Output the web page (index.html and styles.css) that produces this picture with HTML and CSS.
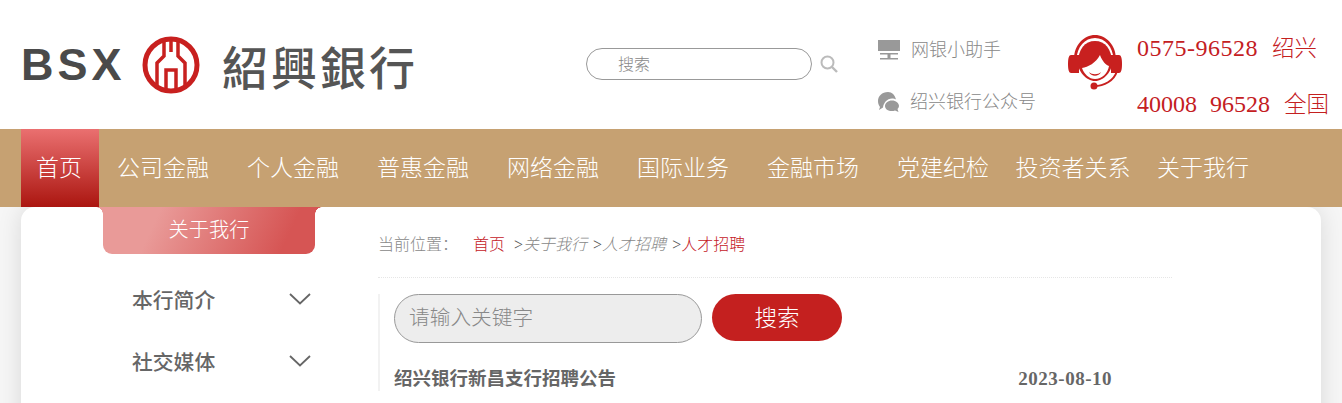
FILE: index.html
```html
<!DOCTYPE html>
<html lang="zh-CN">
<head>
  <meta charset="UTF-8" />
  <title>绍兴银行 - 人才招聘</title>
  <link rel="stylesheet" href="styles.css">
</head>
<body>
  <div class="header">
    <a class="logo" href="#">
      <span class="logo-bsx">BSX</span>
      <svg class="logo-mark" width="58" height="58" viewBox="0 0 58 58">
        <circle cx="29" cy="29" r="26" fill="none" stroke="#c8201f" stroke-width="5"/>
        <path d="M22 3V20L15 27V50M36 3V20L43 27V50M29 3V16M24 53V34H34V53" fill="none" stroke="#c8201f" stroke-width="3.500"/>
      </svg>
      <span class="logo-name">紹興銀行</span>
    </a>

    <div class="search">
      <input class="search-input" type="text" placeholder="搜索">
      <svg class="search-icon" width="18" height="18" viewBox="0 0 18 18">
        <circle cx="7.500" cy="7.500" r="6" fill="none" stroke="#bbb" stroke-width="2"/>
        <path d="M12 12L17 17" stroke="#bbb" stroke-width="2.400"/>
      </svg>
    </div>

    <div class="links">
      <a class="link link-top" href="#">
        <svg width="22" height="20" viewBox="0 0 22 20">
          <path d="M0 0H22V11H0ZM2 13H20V14.500H2ZM9.500 14.500H12.500V18H9.500ZM2 18H20V19.500H2Z" fill="#999"/>
        </svg>
        网银小助手
      </a>
      <a class="link" href="#">
        <svg width="21" height="20" viewBox="0 0 21 20">
          <path d="M10 0C4 0 0 4 0 9C0 11 .5 13 2 15L1 18L5 15.500C5.500 11 9 6.500 14 6.500C15.500 6.500 17 6.800 18 7.500C17 3 14 0 10 0Z" fill="#999"/>
          <path d="M14 8.500C10 8.500 7 11 7 14C7 17 10 19 14 19C15 19 16 19 17 18.500L20.500 20L19.500 17C20.500 16 21 15 21 14C21 11 18 8.500 14 8.500Z" fill="#999"/>
        </svg>
        绍兴银行公众号
      </a>
    </div>

    <svg class="phone-icon" width="54" height="56" viewBox="0 0 54 56">
      <path d="M6 24C6 10 16 0 27 0C38 0 48 10 48 24H45.500C45 12 37 3 27 3C17 3 9 12 8.500 24Z" fill="#c8201f"/>
      <path d="M10 28C10 14 17 6 27 6C37 6 44 14 44 28C44 36 36 46 27 46C18 46 10 36 10 28Z" fill="#c8201f"/>
      <path d="M14 33C20 32 28 28 32 20C34 26 38 30 41 31C40 38 34 44 27 44C21 44 16 39 14 33Z" fill="#fff"/>
      <path d="M21 37C24 40 30 40 33 37C31 42 23 42 21 37Z" fill="#c8201f"/>
      <path d="M3 20H11V38H3C1 38 0 35 0 29C0 23 1 20 3 20ZM43 20H51C53 20 54 23 54 29C54 35 53 38 51 38H43Z" fill="#c8201f"/>
      <path d="M26 51C36 51 46 46 49 36" fill="none" stroke="#c8201f" stroke-width="2"/>
      <circle cx="26" cy="51" r="3.500" fill="#c8201f"/>
    </svg>

    <div class="phones">
      <p class="phones-local">0575-96528&nbsp; <span class="phones-area">绍兴</span></p>
      <p class="phones-all">40008&nbsp; 96528&nbsp; <span class="phones-area">全国</span></p>
    </div>
  </div>

  <div class="nav">
    <a class="nav-item nav-home" href="#">首页</a>
    <a class="nav-item" href="#">公司金融</a>
    <a class="nav-item" href="#">个人金融</a>
    <a class="nav-item" href="#">普惠金融</a>
    <a class="nav-item" href="#">网络金融</a>
    <a class="nav-item" href="#">国际业务</a>
    <a class="nav-item" href="#">金融市场</a>
    <a class="nav-item" href="#">党建纪检</a>
    <a class="nav-item" href="#">投资者关系</a>
    <a class="nav-item" href="#">关于我行</a>
  </div>

  <div class="page">
    <div class="card">
      <div class="side">
        <div class="side-title">关于我行</div>
        <div class="side-item">
          本行简介
          <svg width="22" height="14" viewBox="0 0 22 14"><path d="M1 2L11 11.500L21 2" fill="none" stroke="#666" stroke-width="1.800"/></svg>
        </div>
        <div class="side-item">
          社交媒体
          <svg width="22" height="14" viewBox="0 0 22 14"><path d="M1 2L11 11.500L21 2" fill="none" stroke="#666" stroke-width="1.800"/></svg>
        </div>
      </div>

      <div class="content">
        <div class="crumbs">
          <span class="crumbs-label">当前位置：</span>
          <a class="crumbs-home" href="#">首页</a>
          <span class="crumbs-sep">&gt;</span><a class="crumbs-link" href="#">关于我行</a>
          <span class="crumbs-sep">&gt;</span><a class="crumbs-link" href="#">人才招聘</a>
          <span class="crumbs-sep">&gt;</span><span class="crumbs-now">人才招聘</span>
        </div>

        <div class="list">
          <div class="list-search">
            <input class="keyword" type="text" placeholder="请输入关键字">
            <button class="btn-search" type="button">搜索</button>
          </div>
          <div class="list-row">
            <a href="#">绍兴银行新昌支行招聘公告</a>
            <span class="list-date">2023-08-10</span>
          </div>
        </div>
      </div>
    </div>
  </div>
</body>
</html>
```

FILE: styles.css
```css
:root {
  --rojo: #c4201f;
  --tostado: #c6a172;
  --gris: #666;
}

* {
  box-sizing: border-box;
}

html,
body {
  height: 403px;
  overflow: hidden;
}

body {
  margin: 0;
  font-family: "Liberation Serif", "Noto Sans CJK SC", serif;
  font-weight: 300;
  background-color: #f6f6f6;
  color: var(--gris);
}

a {
  color: inherit;
  text-decoration: none;
}

p {
  margin: 0;
}

.header {
  height: 129px;
  background-color: #fff;
  display: flex;
  padding-left: 21px;
}

.logo {
  flex: none;
  width: 397px;
  height: 129px;
  display: flex;
  align-items: center;
}

.logo-bsx {
  flex: none;
  font-family: "Liberation Sans", sans-serif;
  font-size: 45px;
  font-weight: 700;
  letter-spacing: 4px;
  color: #4a4a4a;
  width: 121px;
}

.logo-mark {
  flex: none;
}

.logo-name {
  flex: none;
  margin-left: 22px;
  font-family: "Noto Sans CJK TC", sans-serif;
  font-size: 46px;
  font-weight: 500;
  letter-spacing: 3px;
  line-height: 1;
  color: #555;
  white-space: nowrap;
}

.search {
  margin-left: 168px;
  margin-top: 48px;
  width: 252px;
  height: 32px;
  display: flex;
  align-items: center;
  gap: 8px;
}

.search-input {
  width: 226px;
  height: 32px;
  border: 1px solid #999;
  border-radius: 16px;
  padding: 1px 0 0 31px;
  font-family: inherit;
  font-weight: 300;
  font-size: 16px;
  outline: none;
}

.search-input::placeholder,
.keyword::placeholder {
  color: #888;
  opacity: 1;
}

.search-icon {
  flex: none;
}

.links {
  margin-left: 40px;
  width: 190px;
  padding-top: 37px;
  display: flex;
  flex-direction: column;
  gap: 31px;
}

.link {
  display: flex;
  align-items: center;
  gap: 11px;
  height: 21px;
  font-size: 18px;
  color: #888;
  white-space: nowrap;
}

.link svg {
  flex: none;
  margin-top: 4px;
}

.link-top {
  gap: 11px;
}

.phone-icon {
  margin-top: 35px;
  flex: none;
}

.phones {
  margin-left: 15px;
  padding-top: 33px;
  font-size: 24px;
  line-height: 30px;
  color: var(--rojo);
  white-space: nowrap;
  display: flex;
  flex-direction: column;
  gap: 25px;
}

.phones-local {
  letter-spacing: 0.5px;
}

.phones-all {
  word-spacing: 0.5px;
}

.phones-area {
  margin-left: 1px;
  font-size: 22.500px;
  letter-spacing: 0;
}

.nav {
  height: 78px;
  padding-left: 21px;
  background-color: var(--tostado);
  display: flex;
}

.nav-item {
  width: 130px;
  flex: none;
  padding-right: 2px;
  font-size: 23px;
  line-height: 80px;
  text-align: center;
  color: #fff;
  white-space: nowrap;
}

.nav-home {
  width: 78px;
  background: linear-gradient(#ea7070, #ab1610);
}

.page {
  height: 196px;
  padding: 0 21px;
  overflow: hidden;
}

.card {
  height: 260px;
  background-color: #fff;
  border-radius: 14px;
  box-shadow: 0 0 24px rgba(0, 0, 0, 0.12);
  display: flex;
}

.side {
  width: 357px;
  flex: none;
}

.side-title {
  position: relative;
  width: 212px;
  height: 47px;
  margin-left: 82px;
  border-radius: 0 0 9px 9px;
  background: linear-gradient(115deg, #e99a98 25%, #d65554 85%);
  color: #fff;
  font-size: 20.300px;
  line-height: 47px;
  text-align: center;
}

.side-title::before,
.side-title::after {
  content: "";
  position: absolute;
  top: 0;
  width: 7px;
  height: 7px;
}

.side-title::before {
  left: -7px;
  background: radial-gradient(circle at 0 100%, transparent 6.500px, #e99a98 7px);
}

.side-title::after {
  right: -7px;
  background: radial-gradient(circle at 100% 100%, transparent 6.500px, #d65554 7px);
}

.side-title + .side-item {
  margin-top: 14px;
}

.side-item {
  width: 179px;
  margin-left: 111px;
  height: 62px;
  display: flex;
  align-items: center;
  justify-content: space-between;
  font-size: 20.800px;
  font-weight: 500;
  color: var(--gris);
}

.content {
  width: 794px;
}

.crumbs {
  height: 71px;
  padding-top: 27px;
  font-size: 16px;
  line-height: 22px;
  border-bottom: 1px dotted #e6e6e6;
  color: #888;
  white-space: nowrap;
}

.crumbs-label {
  margin-right: 11px;
}

.crumbs-home,
.crumbs-now {
  color: var(--rojo);
}

.crumbs-home {
  margin-right: 5px;
}

.crumbs-sep {
  color: #555;
}

.crumbs-link + .crumbs-sep {
  margin-left: 2px;
}

.crumbs-link {
  font-style: italic;
  color: #888;
}

.list {
  margin-top: 16px;
  padding-left: 14px;
  border-left: 2px solid #f2f2f2;
}

.list-search {
  display: flex;
  gap: 10px;
}

.keyword {
  width: 308px;
  height: 49px;
  border: 1px solid #999;
  border-radius: 25px;
  background-color: #ededed;
  padding: 0 14px;
  font-family: inherit;
  font-weight: 300;
  font-size: 20.700px;
  outline: none;
}

.btn-search {
  width: 130px;
  height: 47px;
  padding: 0 0 4px;
  border: none;
  border-radius: 24px;
  background-color: var(--rojo);
  color: #fff;
  font-family: inherit;
  font-weight: 300;
  font-size: 22.500px;
}

.list-row {
  margin-top: 24px;
  display: flex;
  width: 718px;
  justify-content: space-between;
  font-size: 18.500px;
  font-weight: 700;
  line-height: 24px;
  color: var(--gris);
}

.list-date {
  font-size: 19px;
  letter-spacing: 0.5px;
}
```
